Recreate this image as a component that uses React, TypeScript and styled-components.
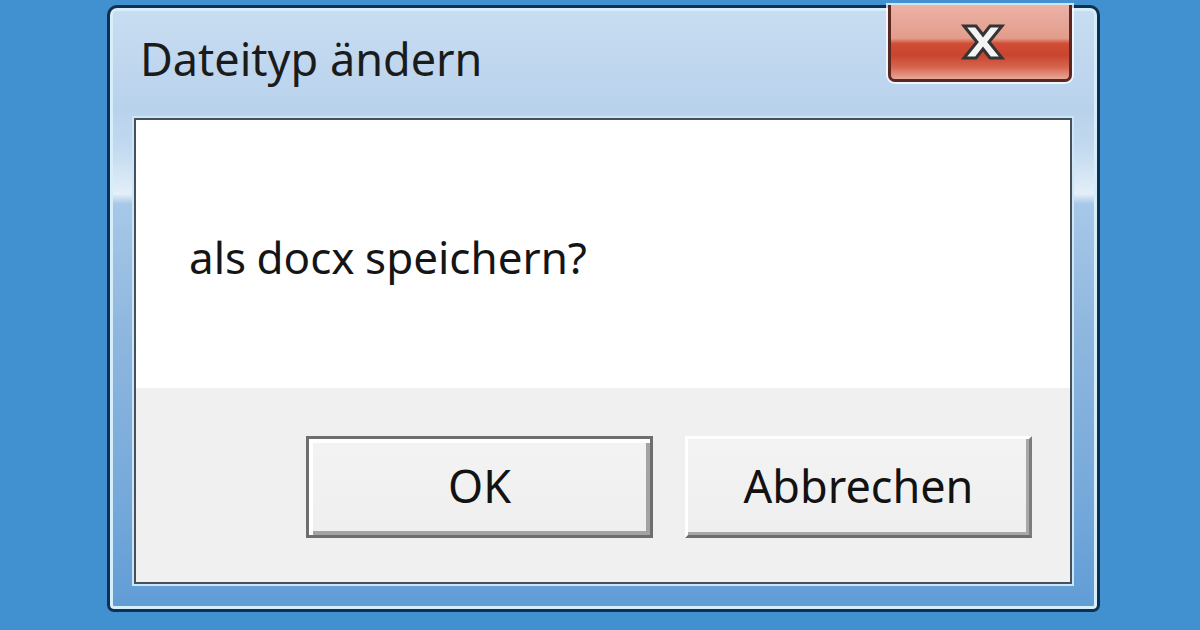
import styled, { createGlobalStyle } from 'styled-components';

const GlobalStyle = createGlobalStyle`
  html, body {
    margin: 0;
    padding: 0;
    background: #4190cf;
  }
  * {
    box-sizing: border-box;
  }
`;

const Desktop = styled.div`
  width: 1200px;
  height: 630px;
  padding: 5px 0 0 107px;
  background: #4190cf;
  font-family: 'Noto Sans', 'Open Sans', 'DejaVu Sans', sans-serif;
  overflow: hidden;
`;

const Window = styled.div`
  display: flex;
  flex-direction: column;
  width: 993px;
  height: 607px;
  padding: 0 25px 25px 24px;
  border: 3px solid #0f3050;
  border-radius: 10px 10px 7px 7px;
  box-shadow: inset 0 0 0 3px #d6eefa;
  background: linear-gradient(
    180deg,
    #c8ddf1 0px,
    #b9d2ec 100px,
    #c2d9ef 140px,
    #e3eff9 186px,
    #a7c8e8 196px,
    #8fb7df 320px,
    #74a8da 500px,
    #5f9cd5 607px
  );
`;

const TitleBar = styled.div`
  display: flex;
  justify-content: space-between;
  align-items: flex-start;
  height: 110px;
  flex-shrink: 0;
`;

const Title = styled.div`
  margin: 20px 0 0 6px;
  font-size: 45px;
  color: #1b1b1b;
  line-height: normal;
`;

const CloseButton = styled.div`
  display: flex;
  align-items: center;
  justify-content: center;
  width: 184px;
  height: 77px;
  margin-top: -3px;
  padding-left: 6px;
  border: 3px solid #5a2822;
  border-top: none;
  border-radius: 0 0 7px 7px;
  box-shadow: 0 0 0 2px rgba(255, 255, 255, 0.75);
  background: linear-gradient(
    180deg,
    #ebb2a5 0%,
    #e39c8c 45%,
    #d14d36 52%,
    #c9452e 68%,
    #d6644f 84%,
    #eaa898 100%
  );
`;

const Client = styled.div`
  flex: 1;
  display: flex;
  flex-direction: column;
  border: 2px solid #45525e;
  box-shadow: 0 0 0 2px #cde6f7;
`;

const Message = styled.div`
  flex: 1;
  display: flex;
  align-items: center;
  padding: 6px 0 0 53px;
  background: #ffffff;
  font-size: 44px;
  word-spacing: -1px;
  color: #151515;
`;

const ButtonRow = styled.div`
  display: flex;
  justify-content: flex-end;
  align-items: flex-start;
  gap: 32px;
  height: 194px;
  padding: 48px 38px 0 0;
  background: #f0f0f0;
`;

const DialogButton = styled.div<{ $isDefault?: boolean }>`
  display: flex;
  align-items: center;
  justify-content: center;
  width: 347px;
  height: 102px;
  padding-bottom: 4px;
  font-size: 45px;
  color: #121212;
  background: linear-gradient(180deg, #f3f3f3 0%, #efefef 100%);
  border: 3px solid;
  border-color: ${(p) =>
    p.$isDefault ? '#6e6e6e' : '#ffffff #7c7c7c #6e6e6e #ffffff'};
  box-shadow: ${(p) =>
    p.$isDefault
      ? 'inset 4px 4px 0 #ffffff, inset -4px -4px 0 #a3a3a3'
      : 'inset -3px -3px 0 #a8a8a8'};
`;

function CloseGlyph() {
  return (
    <svg width="44" height="38" viewBox="-3 -3 44 38">
      <polygon
        points="0,0 12,0 19,9 26,0 38,0 25,16 38,32 26,32 19,23 12,32 0,32 13,16"
        fill="#f4f4f4"
        stroke="#343434"
        strokeWidth="3"
        strokeLinejoin="miter"
      />
    </svg>
  );
}

export default function App() {
  return (
    <>
      <GlobalStyle />
      <Desktop>
        <Window>
          <TitleBar>
            <Title>Dateityp ändern</Title>
            <CloseButton>
              <CloseGlyph />
            </CloseButton>
          </TitleBar>
          <Client>
            <Message>als docx speichern?</Message>
            <ButtonRow>
              <DialogButton $isDefault>OK</DialogButton>
              <DialogButton>Abbrechen</DialogButton>
            </ButtonRow>
          </Client>
        </Window>
      </Desktop>
    </>
  );
}
